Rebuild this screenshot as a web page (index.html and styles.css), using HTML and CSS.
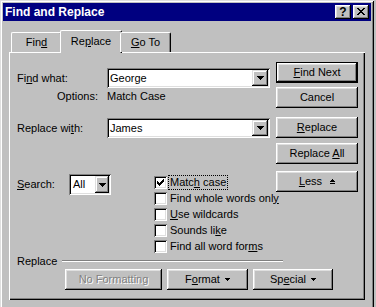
FILE: index.html
```html
<!DOCTYPE html>
<html>
<head>
<meta charset="utf-8">
<title>Find and Replace</title>
<link rel="stylesheet" href="styles.css">
</head>
<body>
<div class="window">
  <div class="titlebar">
    <span class="title">Find and Replace</span>
    <div class="tbtns">
      <span class="tbtn help">?</span>
      <span class="tbtn close"><svg width="8" height="7" viewBox="0 0 8 7" shape-rendering="crispEdges"><path d="M0 0h2v1h-2zM6 0h2v1h-2zM1 1h2v1h-2zM5 1h2v1h-2zM2 2h4v1h-4zM3 3h2v1h-2zM2 4h4v1h-4zM1 5h2v1h-2zM5 5h2v1h-2zM0 6h2v1h-2zM6 6h2v1h-2z" fill="#000"/></svg></span>
    </div>
  </div>
  <div class="client">
    <div class="tabs">
      <div class="tab first">Fin<u>d</u></div>
      <div class="tab sel">Re<u>p</u>lace</div>
      <div class="tab"><u>G</u>o To</div>
    </div>
    <div class="panel">
      <div class="main">
        <div class="left">
          <div class="row r1">
            <span class="lbl">Fi<u>n</u>d what:</span>
            <div class="combo"><span class="val">George</span><span class="dd"><svg width="7" height="4" viewBox="0 0 7 4" shape-rendering="crispEdges"><path d="M0 0h7v1h-7zM1 1h5v1h-5zM2 2h3v1h-3zM3 3h1v1h-1z" fill="#000"/></svg></span></div>
          </div>
          <div class="opts"><span class="lbl right">Options:</span><span>Match Case</span></div>
          <div class="row r2">
            <span class="lbl">Replace wi<u>t</u>h:</span>
            <div class="combo"><span class="val">James</span><span class="dd"><svg width="7" height="4" viewBox="0 0 7 4" shape-rendering="crispEdges"><path d="M0 0h7v1h-7zM1 1h5v1h-5zM2 2h3v1h-3zM3 3h1v1h-1z" fill="#000"/></svg></span></div>
          </div>
          <div class="search">
            <span class="slbl"><u>S</u>earch:</span>
            <div class="combo sel-all"><span class="val">All</span><span class="dd"><svg width="7" height="4" viewBox="0 0 7 4" shape-rendering="crispEdges"><path d="M0 0h7v1h-7zM1 1h5v1h-5zM2 2h3v1h-3zM3 3h1v1h-1z" fill="#000"/></svg></span></div>
            <div class="checks">
              <div class="check"><span class="box"><svg width="7" height="7" viewBox="0 0 7 7" shape-rendering="crispEdges"><path d="M0 2h1v3h-1zM1 3h1v3h-1zM2 4h1v3h-1zM3 3h1v3h-1zM4 2h1v3h-1zM5 1h1v3h-1zM6 0h1v3h-1z" fill="#000"/></svg></span><span class="clbl focus">Matc<u>h</u> case</span></div>
              <div class="check"><span class="box"></span><span class="clbl">Find whole words onl<u>y</u></span></div>
              <div class="check"><span class="box"></span><span class="clbl"><u>U</u>se wildcards</span></div>
              <div class="check"><span class="box"></span><span class="clbl">Sounds li<u>k</u>e</span></div>
              <div class="check"><span class="box"></span><span class="clbl">Find all word for<u>m</u>s</span></div>
            </div>
          </div>
        </div>
        <div class="buttons">
          <div class="btn default"><span><u>F</u>ind Next</span></div>
          <div class="btn b-cancel">Cancel</div>
          <div class="btn b-replace"><span><u>R</u>eplace</span></div>
          <div class="btn b-all"><span>Replace <u>A</u>ll</span></div>
          <div class="btn b-less"><span><u>L</u>ess</span><svg class="lessicon" width="5" height="5" viewBox="0 0 5 5" shape-rendering="crispEdges"><path d="M2 0h1v1h-1zM1 1h3v1h-3zM0 2h5v1h-5zM0 4h5v1h-5z" fill="#000"/></svg></div>
        </div>
      </div>
      <div class="group">
        <div class="gtitle"><span>Replace</span><span class="line"></span></div>
        <div class="gbtns">
          <div class="btn disabled w-nf">No Formatting</div>
          <div class="btn w-fmt"><span>F<u>o</u>rmat</span><svg class="tri" width="5" height="3" viewBox="0 0 5 3" shape-rendering="crispEdges"><path d="M0 0h5v1h-5zM1 1h3v1h-3zM2 2h1v1h-1z" fill="#000"/></svg></div>
          <div class="btn w-sp"><span>Sp<u>e</u>cial</span><svg class="tri" width="5" height="3" viewBox="0 0 5 3" shape-rendering="crispEdges"><path d="M0 0h5v1h-5zM1 1h3v1h-3zM2 2h1v1h-1z" fill="#000"/></svg></div>
        </div>
      </div>
    </div>
  </div>
</div>
</body>
</html>
```
FILE: styles.css
```css
* { box-sizing: border-box; }
html, body { margin: 0; padding: 0; }
body {
  background: #c0c0c0;
  font-family: "Liberation Sans", Arial, sans-serif;
  font-size: 11px;
  line-height: 13px;
  color: #000;
  width: 376px;
  height: 307px;
  overflow: hidden;
}
u { text-decoration: underline; text-underline-offset: 1px; text-decoration-thickness: 1px; }

.window {
  width: 374px;
  height: 312px;
  padding: 3px;
  background: #c0c0c0;
  box-shadow: inset 1px 1px #dfdfdf, inset -1px -1px #000, inset 2px 2px #fff, inset -2px -2px #808080;
}
.titlebar {
  height: 18px;
  background: #000080;
  display: flex;
  align-items: center;
  justify-content: space-between;
  padding: 0 2px 0 2px;
}
.title { color: #fff; font-weight: bold; font-size: 12px; line-height: 14px; }
.tbtns { display: flex; gap: 2px; }
.tbtn {
  width: 16px;
  height: 14px;
  background: #c0c0c0;
  box-shadow: inset -1px -1px #000, inset 1px 1px #fff, inset -2px -2px #808080, inset 2px 2px #dfdfdf;
  display: flex;
  align-items: center;
  justify-content: center;
  font-weight: bold;
  font-size: 12px;
  line-height: 12px;
  padding-bottom: 1px;
}
.tbtn.close { padding-right: 1px; }

.client { padding: 9px 6px 0 6px; }
.tabs {
  display: flex;
  align-items: flex-end;
  height: 22px;
  position: relative;
  z-index: 1;
}
.tab {
  width: 51px;
  height: 20px;
  margin-left: -2px;
  flex-shrink: 0;
  display: flex;
  align-items: center;
  justify-content: center;
  background: #c0c0c0;
  border-top: 1px solid #fff;
  border-left: 1px solid #fff;
  border-right: 1px solid #000;
  border-radius: 2px 2px 0 0;
  box-shadow: inset -1px 0 #808080;
}
.tab.first { margin-left: 2px; }
.tab.sel { width: 62px; height: 23px; margin-bottom: -1px; padding-bottom: 1px; }

.panel {
  height: 248px;
  padding: 10px 7px 0 8px;
  box-shadow: inset 1px 1px #fff, inset -1px -1px #000, inset -2px -2px #808080;
}
.main { display: flex; }
.left { flex: 1; min-width: 0; }
.row { display: flex; align-items: center; height: 20px; }
.row > *, .search > *, .opts > * { flex-shrink: 0; }
.r1 { margin-top: 6px; }
.r2 { margin-top: 15px; }
.lbl { width: 90px; }
.opts { display: flex; margin-top: 2px; height: 13px; }
.lbl.right { text-align: right; padding-right: 9px; }

.combo {
  width: 163px;
  height: 20px;
  background: #fff;
  padding: 2px;
  display: flex;
  align-items: center;
  box-shadow: inset 1px 1px #808080, inset -1px -1px #fff, inset 2px 2px #000, inset -2px -2px #dfdfdf;
}
.combo .val { flex: 1; padding-left: 1px; }
.dd {
  width: 16px;
  height: 16px;
  flex-shrink: 0;
  background: #c0c0c0;
  display: flex;
  align-items: center;
  justify-content: center;
  box-shadow: inset -1px -1px #000, inset 1px 1px #dfdfdf, inset -2px -2px #808080, inset 2px 2px #fff;
}
.search { display: flex; align-items: flex-start; margin-top: 36px; }
.slbl { width: 52px; height: 21px; display: flex; align-items: center; }
.combo.sel-all { width: 42px; height: 21px; }
.combo.sel-all .val { padding-left: 2px; }
.combo.sel-all .dd { width: 14px; height: 17px; }
.checks { margin-left: 43px; }
.check { display: flex; align-items: center; height: 16.2px; }
.box {
  width: 13px;
  height: 13px;
  flex-shrink: 0;
  background: #fff;
  display: flex;
  align-items: center;
  justify-content: center;
  box-shadow: inset 1px 1px #808080, inset -1px -1px #fff, inset 2px 2px #000, inset -2px -2px #dfdfdf;
}
.clbl { margin-left: 2px; padding: 0 1px; white-space: nowrap; }
.clbl.focus { outline: 1px dotted #000; }

.buttons { width: 82px; flex-shrink: 0; display: flex; flex-direction: column; }
.btn {
  height: 21px;
  display: flex;
  align-items: center;
  justify-content: center;
  background: #c0c0c0;
  white-space: nowrap;
  flex-shrink: 0;
  box-shadow: inset -1px -1px #000, inset 1px 1px #fff, inset -2px -2px #808080, inset 2px 2px #dfdfdf;
}
.btn.default { border: 1px solid #000; }
.b-cancel { margin-top: 4px; }
.b-replace { margin-top: 9px; }
.b-all { margin-top: 5px; }
.b-less { margin-top: 7px; }
.lessicon { margin-left: 8px; margin-top: -1px; }
.tri { margin-left: 5px; }
.btn.disabled { color: #808080; text-shadow: 1px 1px #fff; }

.gtitle { display: flex; align-items: center; height: 14px; }
.line { width: 221px; height: 2px; margin-left: 5px; border-top: 1px solid #808080; border-bottom: 1px solid #fff; margin-top: -1px; }
.gbtns { display: flex; gap: 5px; padding-left: 48px; }
.w-nf { width: 97px; }
.w-fmt { width: 81px; }
.w-sp { width: 80px; }
```
